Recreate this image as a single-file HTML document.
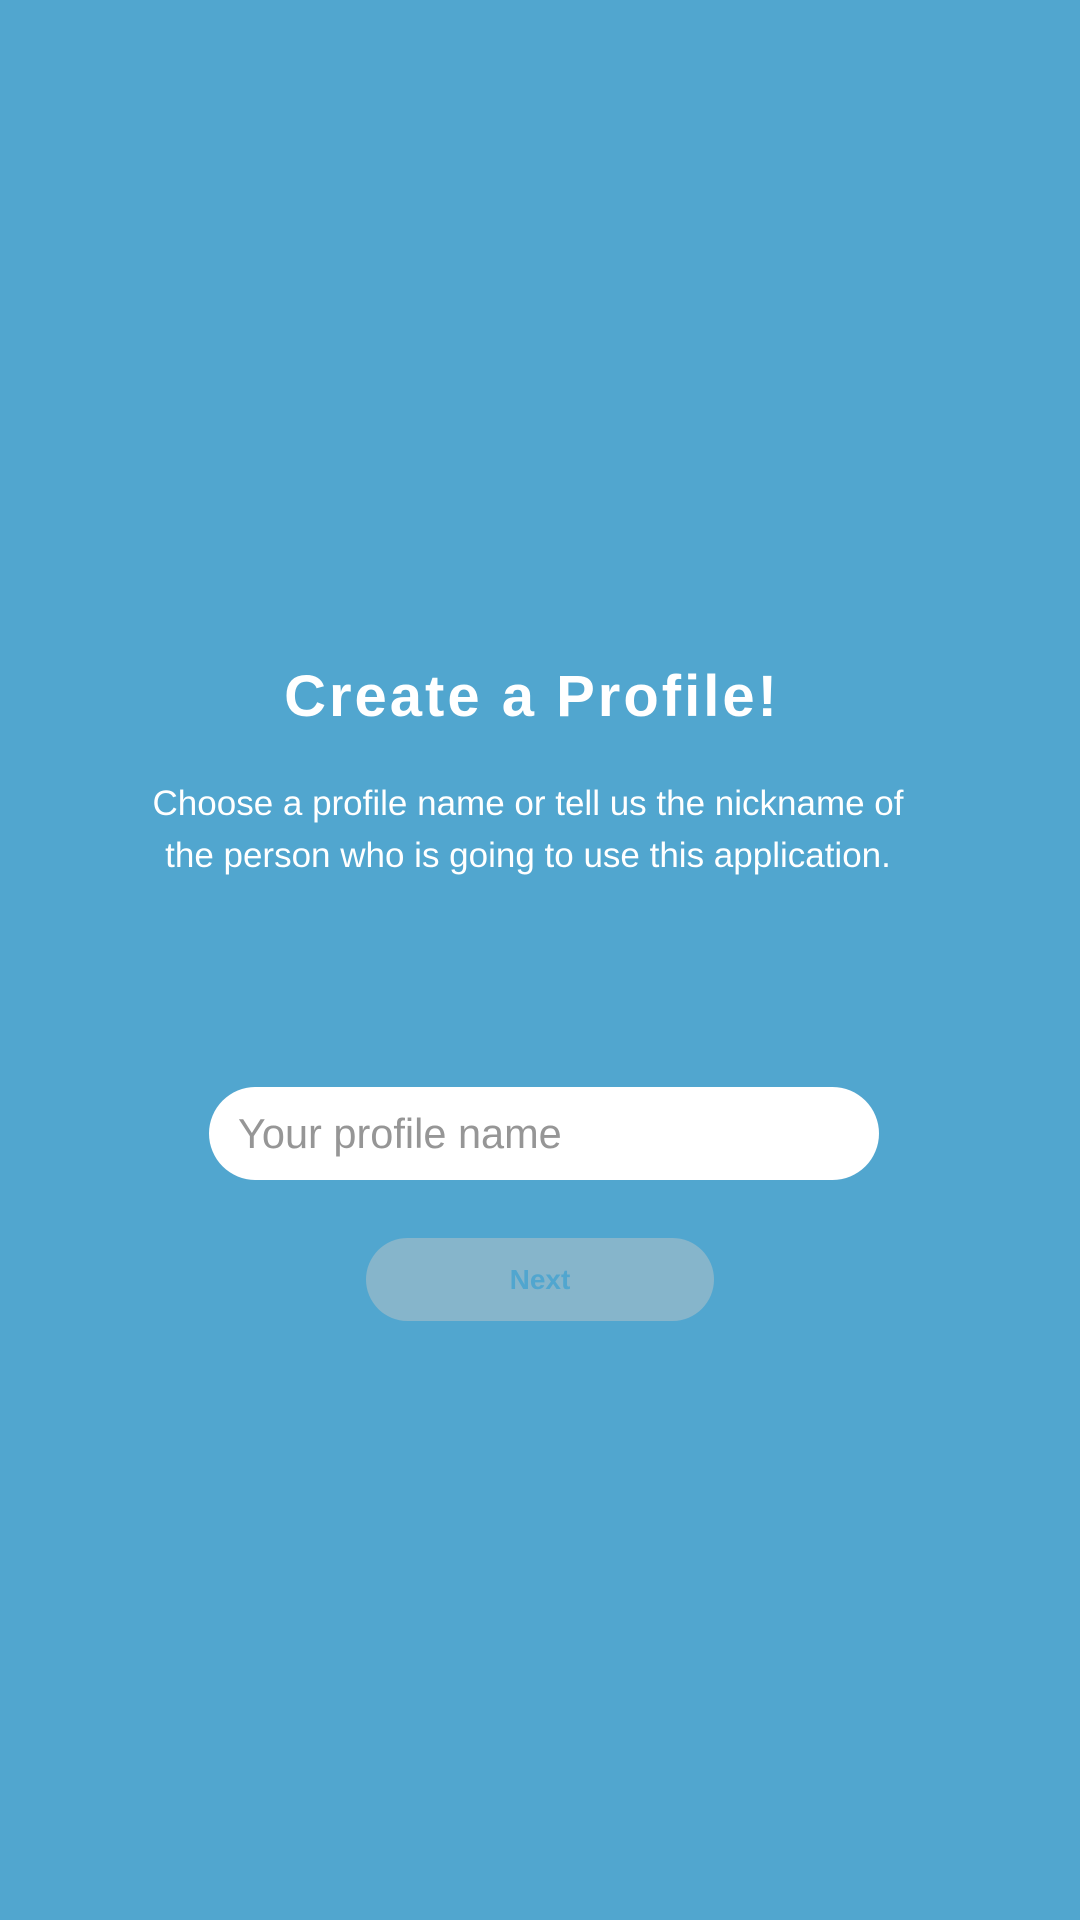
<!DOCTYPE html>
<html><head><meta charset="utf-8"><style>
html,body{margin:0;padding:0;width:1080px;height:1920px;background:#51a6cf;overflow:hidden;font-family:"Liberation Sans",sans-serif;}
.t{position:absolute;left:-12px;width:1080px;text-align:center;color:#fff;}
h1{position:absolute;left:-8px;width:1080px;top:662px;margin:0;text-align:center;color:#fff;font-size:58px;font-weight:bold;letter-spacing:3px;line-height:70px;}
.p{top:778px;font-size:35px;line-height:52px;}
.in{position:absolute;left:209px;top:1087px;width:670px;height:93px;border-radius:47px;background:#fff;}
.in span{position:absolute;left:29px;top:0;line-height:93px;font-size:41.5px;color:#969696;}
.btn{position:absolute;left:366px;top:1238px;width:348px;height:83px;border-radius:42px;background:#86b5cb;color:#51a6cf;font-weight:bold;font-size:28px;text-align:center;line-height:83px;}
</style></head><body>
<h1>Create a Profile!</h1>
<div class="t p">Choose a profile name or tell us the nickname of<br>the person who is going to use this application.</div>
<div class="in"><span>Your profile name</span></div>
<div class="btn">Next</div>
</body></html>
